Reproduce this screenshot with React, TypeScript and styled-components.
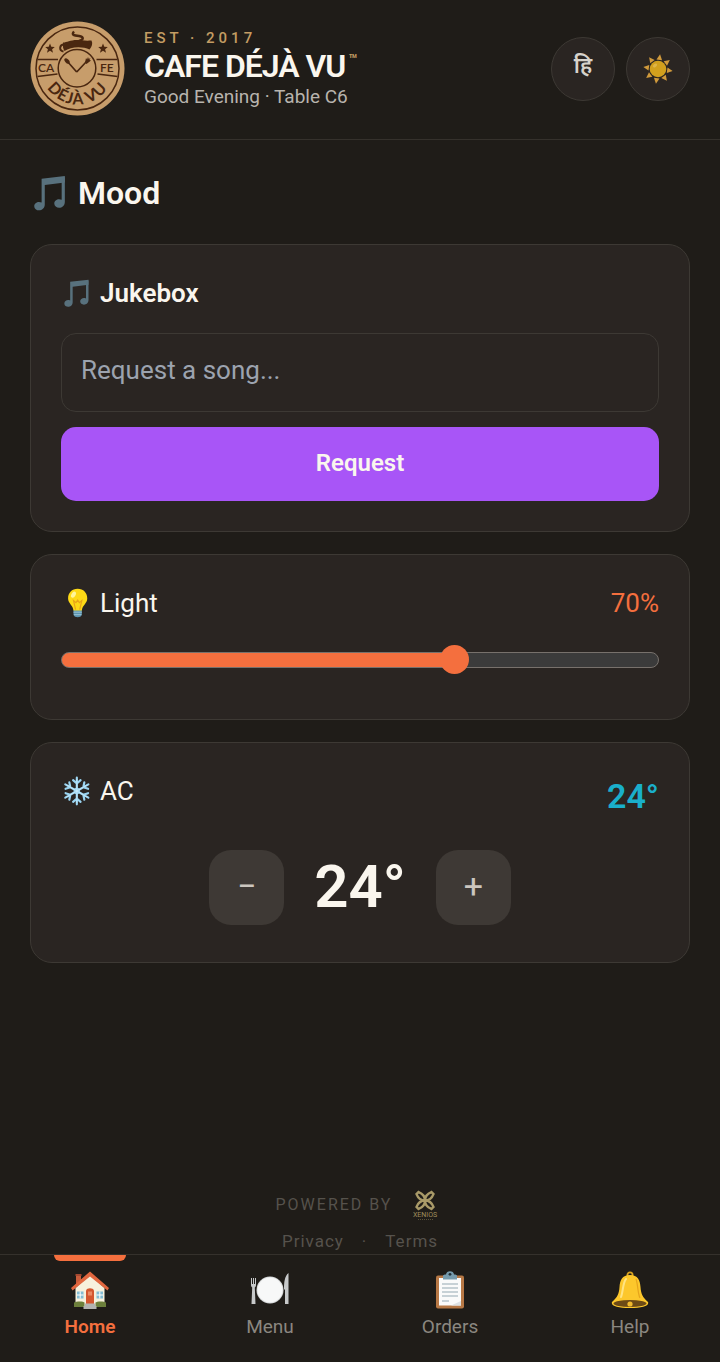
import { CSSProperties, FormEvent, useState } from "react";
import styled, { createGlobalStyle } from "styled-components";

const MIN_LIGHT = 10;
const MAX_LIGHT = 100;

const tabs = [
  { id: "home", label: "Home", Icon: HouseIcon },
  { id: "menu", label: "Menu", Icon: PlateIcon },
  { id: "orders", label: "Orders", Icon: ClipboardIcon },
  { id: "help", label: "Help", Icon: BellIcon },
];

const App = () => {
  const [song, setSong] = useState("");
  const [light, setLight] = useState(70);
  const [temp, setTemp] = useState(24);
  const [tab, setTab] = useState("home");

  const fill = (light - MIN_LIGHT) / (MAX_LIGHT - MIN_LIGHT);

  const handleRequest = (e: FormEvent) => {
    e.preventDefault();
    setSong("");
  };

  return (
    <Page>
      <GlobalStyle />
      <Header>
        <Logo />
        <Brand>
          <Est>EST · 2017</Est>
          <Name>
            CAFE DÉJÀ VU<Mark>™</Mark>
          </Name>
          <Greeting>Good Evening · Table C6</Greeting>
        </Brand>
        <RoundButton type="button" lang="hi">
          हि
        </RoundButton>
        <RoundButton type="button" aria-label="Theme">
          <SunIcon />
        </RoundButton>
      </Header>

      <Main>
        <Title>
          <NoteIcon />
          Mood
        </Title>

        <Card>
          <form onSubmit={handleRequest}>
            <CardTitle>
              <NoteIcon />
              Jukebox
            </CardTitle>
            <SongInput
              type="text"
              aria-label="Request a song"
              placeholder="Request a song..."
              value={song}
              onChange={(e) => setSong(e.target.value)}
            />
            <RequestButton type="submit">Request</RequestButton>
          </form>
        </Card>

        <Card>
          <Row>
            <Label htmlFor="light">
              <BulbIcon />
              Light
            </Label>
            <Percent>{light}%</Percent>
          </Row>
          <Slider
            id="light"
            type="range"
            min={MIN_LIGHT}
            max={MAX_LIGHT}
            value={light}
            onChange={(e) => setLight(Number(e.target.value))}
            style={{ "--fill": fill } as CSSProperties}
          />
        </Card>

        <Card>
          <Row>
            <Label as="span">
              <SnowIcon />
              AC
            </Label>
            <AcValue>{temp}°</AcValue>
          </Row>
          <Stepper>
            <StepButton type="button" onClick={() => setTemp(temp - 1)}>
              −
            </StepButton>
            <Temp>{temp}°</Temp>
            <StepButton type="button" onClick={() => setTemp(temp + 1)}>
              +
            </StepButton>
          </Stepper>
        </Card>
      </Main>

      <Footer>
        <Powered>
          POWERED BY
          <XeniosLogo />
        </Powered>
        <Links>
          <a href="#privacy">Privacy</a>
          <span>·</span>
          <a href="#terms">Terms</a>
        </Links>
      </Footer>

      <Nav>
        {tabs.map(({ id, label, Icon }) => (
          <Tab
            key={id}
            type="button"
            $active={tab === id}
            onClick={() => setTab(id)}
          >
            <Icon />
            {label}
          </Tab>
        ))}
      </Nav>
    </Page>
  );
};
export default App;

function Logo() {
  return (
    <LogoSvg viewBox="0 0 95 95" role="img" aria-label="Cafe Déjà Vu">
      <circle cx="47.5" cy="47.5" r="47" fill="#c79d6b" />
      <g fill="none" stroke="#4a2710" strokeWidth="1.5">
        <circle cx="47.5" cy="47.5" r="41.5" />
        <path d="M7.500 38.500h20.500M66.500 38.500h21M7.500 55.500l20-2.500M67.500 53l20 2.500" />
        <circle cx="47" cy="47.300" r="18.800" />
        <path d="M46.700 51 37 40M46.700 51 57 40" strokeWidth="1.700" />
        <path d="M34 23.500c-4.500 0-5.500 6-.5 7" strokeWidth="2" />
        <path d="M49 20c5-1.500 5-4 0-5-5-.5-8-1-5-4.500" strokeWidth="2.400" />
      </g>
      <g fill="#4a2710">
        <path d="M33 21.500c4 0 7-2.500 14-2.500 5 0 7 1 14.500.5 1.500 3 .5 6-2 9-7-3.500-19-3-25 1.500-1.500-2-2-5-1.500-8.500Z" />
        <ellipse cx="37" cy="40" rx="2" ry="3.200" transform="rotate(-42 37 40)" />
        <path d="m55 41.500 1-4.500 1 1.500 1-2.500.8 2 1.700-1-1 2 1.500.5-4.500 3.500Z" />
        <path d="m20 22.500 1.300 3.300 3.500.2-2.700 2.300.9 3.500-3-2-3 2 .9-3.500-2.700-2.300 3.500-.2Z" />
        <path d="m73 22.500 1.300 3.300 3.500.2-2.700 2.300.9 3.500-3-2-3 2 .9-3.500-2.700-2.300 3.500-.2Z" />
        <path id="arc" d="M11.500 47.500a36 36 0 0 0 72 0" fill="none" />
        <text x="8" y="50.500" fontSize="12" fontWeight="600" fontFamily="Lato">
          CA
        </text>
        <text x="70" y="50.500" fontSize="12" fontWeight="600" fontFamily="Lato">
          FE
        </text>
        <text
          fontSize="16"
          fontWeight="700"
          fontFamily="Lato"
          letterSpacing="1"
          textAnchor="middle"
        >
          <textPath href="#arc" startOffset="50%">
            DÉJÀ VU
          </textPath>
        </text>
      </g>
    </LogoSvg>
  );
}

function SunIcon() {
  return (
    <svg width="32" height="32" viewBox="0 0 32 32" aria-hidden="true">
      <g fill="#d09a3c">
        {[8, 53, 98, 143, 188, 233, 278, 323].map((a) => (
          <path key={a} d="M16 1.200 18.800 6.800 13.200 6.800Z" transform={`rotate(${a} 16 16)`} />
        ))}
      </g>
      <circle cx="16" cy="16" r="8.300" fill="#d2a01d" />
      <ellipse cx="13" cy="12.500" rx="2.500" ry="1.500" fill="#dfb548" transform="rotate(-40 13 12.500)" />
    </svg>
  );
}

function NoteIcon() {
  return (
    <svg viewBox="0 0 36 36" fill="#58717d" aria-hidden="true">
      <path d="M11 4.500 33 2v6L14 10.500V29c0 7-10 7-10 1.500 0-3.500 4-5 7-3.500Z" />
      <path d="M30 3h3v23.500c0 7-10 7-10 1.500 0-3.500 4-5 7-3.500Z" />
    </svg>
  );
}

function BulbIcon() {
  return (
    <svg viewBox="0 0 36 36" aria-hidden="true">
      <g transform="translate(2 0)">
        <path d="M13 26h10v6c-1 4-9 4-10 0Z" fill="#5c94b0" />
        <path d="M13 29h10M13.500 32h9" stroke="#9cc4d4" strokeWidth="1.200" />
        <path d="M18 1C11 1 6.500 6 6.500 12.500c0 6 6 8 6.500 14.500h10c.5-6.500 6.500-8.500 6.500-14.500C29.500 6 25 1 18 1Z" fill="#fdd916" />
        <path d="m15.500 26-2.500-11 3 2.500 2-3 2 3 3-2.500-2.500 11" fill="none" stroke="#e9a419" strokeWidth="1.400" />
        <ellipse cx="13" cy="8" rx="2.500" ry="4" fill="#fff59a" transform="rotate(30 13 8)" />
      </g>
    </svg>
  );
}

function SnowIcon() {
  return (
    <svg viewBox="0 0 36 36" fill="none" stroke="#9bd5f2" strokeWidth="2.600" strokeLinecap="round" aria-hidden="true">
      {[0, 60, 120, 180, 240, 300].map((a) => (
        <path
          key={a}
          d="M19 18V2M19 9l-4.500-4M19 9l4.500-4"
          transform={`rotate(${a} 19 18)`}
        />
      ))}
      <circle cx="19" cy="18" r="2.500" fill="#9bd5f2" />
      <path d="M19 4v28M7 11l24 14M7 25l24-14" stroke="#d3effb" strokeWidth="0.800" />
    </svg>
  );
}

function HouseIcon() {
  return (
    <svg viewBox="0 0 38 38" aria-hidden="true">
      <path d="M5 4h5v11H5Z" fill="#c95c3b" />
      <path d="M4.500 3h6v2h-6Z" fill="#a54830" />
      <path d="M4.500 17 19 4l14.500 13v18h-29Z" fill="#f7f1dd" />
      <path d="M19 .500 38 17l-1.500 2.500L19 5.500 1.500 19.500 0 17Z" fill="#e2673f" />
      <path d="M15 19.500c1-3 7-3 8 0V33h-8Z" fill="#d4562f" />
      <path d="M17 20.500h4v4h-4Z" fill="#e98a64" />
      <path d="M6 20.500h6.500v7H6ZM25.500 20.500H32v7h-6.500Z" fill="#83bcd3" />
      <path d="M9.200 20.500v7M6 24h6.500M28.800 20.500v7M25.500 24H32" stroke="#fff" />
      <path d="M3 31.500c2-1.500 10-1.500 10.500 0V36H3ZM24.500 31.500c1-1.500 9-1.500 10.500 0V36H24.500Z" fill="#6c7f3b" />
      <path d="M14 32.500h10V35h1.500v3h-13v-3H14Z" fill="#b3b3b1" />
    </svg>
  );
}

function PlateIcon() {
  return (
    <svg viewBox="0 0 38 38" aria-hidden="true">
      <circle cx="19" cy="19" r="13.500" fill="#d9dbdc" />
      <circle cx="19" cy="19" r="12.500" fill="#f7f8f8" />
      <path d="M0 7h1v6h1V7h1v6h1V7h1v7c0 1-.5 2-1.200 2.500L4.500 33h-4l.7-16.500C.5 16 0 15 0 14Z" fill="#c7c9ca" />
      <path d="M37.500 2v31h-3.500V19l-1-1c0-6 .5-13 4.500-16Z" fill="#c7c9ca" />
    </svg>
  );
}

function ClipboardIcon() {
  return (
    <svg viewBox="0 0 38 38" aria-hidden="true">
      <rect x="5" y="4.500" width="28" height="33" rx="2" fill="#b77845" />
      <path d="M8 7h22v27.500H8Z" fill="#fafafa" />
      <path d="M11 13h16M11 17h16M11 21h16M11 25h16M11 30h7" stroke="#94a8b2" />
      <path d="M20 34.500 30 30v4.500Z" fill="#dde1e3" />
      <path d="M12 8.500V5c0-1 1-1.500 3-1.500 0-4.500 8-4.500 8 0 2 0 3 .5 3 1.500v3.500Z" fill="#769bad" />
      <circle cx="19" cy="3.300" r="1.400" fill="#22313a" />
    </svg>
  );
}

function BellIcon() {
  return (
    <svg viewBox="0 0 38 38" aria-hidden="true">
      <circle cx="19" cy="4" r="2.600" fill="none" stroke="#d9a320" strokeWidth="1.800" />
      <path d="M19 4C11 4 9 9 8.500 16 8 23 6.500 26 1 31c-1.500 4 6 6 18 6s19.500-2 18-6c-5.500-5-7-8-7.500-15C29 9 27 4 19 4Z" fill="#fcc72c" />
      <ellipse cx="19" cy="32.500" rx="16.500" ry="3.500" fill="#6c4a16" />
      <circle cx="19" cy="33" r="2.600" fill="#f0b92d" />
      <path d="M15 8c-3 3-3 13-5 18" fill="none" stroke="#ffe484" strokeWidth="2" strokeLinecap="round" />
      <path d="M25 8c2 5 1.500 14 4 19" fill="none" stroke="#e6a41c" strokeWidth="1.200" />
    </svg>
  );
}

function XeniosLogo() {
  return (
    <svg width="38" height="30" viewBox="0 0 38 30" fill="#a08f5c" role="img" aria-label="Xenios">
      <g fill="none" stroke="#a99a68" strokeWidth="2.400">
        {[45, 135, 225, 315].map((a) => (
          <path key={a} d="M19 10.500c-3-3-3.500-6-1.500-10.500h3c2 4.500 1.500 7.500-1.500 10.500Z" transform={`rotate(${a} 19 10.500)`} />
        ))}
      </g>
      <text x="19" y="27" fontSize="7" textAnchor="middle">
        XENIOS
      </text>
      <path d="M12 29.500h16" stroke="#5a5138" strokeDasharray="1 1" />
    </svg>
  );
}

const GlobalStyle = createGlobalStyle`
  * {
    box-sizing: border-box;
  }
  body {
    margin: 0;
    background: #1f1c18;
    color: #faf6ee;
    font-family: Roboto, "Noto Sans", sans-serif;
  }
  h1, h2, h3, p {
    margin: 0;
  }
  button, input {
    font-family: inherit;
  }
  button {
    cursor: pointer;
    border: 0;
    padding: 0;
  }
`;

const Page = styled.div`
  min-height: 100vh;
  display: flex;
  flex-direction: column;
`;
const Header = styled.header`
  display: flex;
  align-items: center;
  gap: 11px;
  padding: 21px 30px 23px;
  border-bottom: 1px solid #35312c;
`;
const LogoSvg = styled.svg`
  width: 95px;
  height: 95px;
  flex-shrink: 0;
`;
const Brand = styled.div`
  flex: 1;
  padding-left: 8px;
`;
const Est = styled.p`
  font-size: 15px;
  line-height: 20px;
  font-weight: 500;
  letter-spacing: 4px;
  color: #c39c63;
`;
const Name = styled.h1`
  display: flex;
  font-size: 32px;
  line-height: 36px;
  font-weight: 600;
  letter-spacing: -1px;
`;
const Mark = styled.span`
  padding-left: 3px;
  font-size: 15px;
  line-height: 24px;
  letter-spacing: 0;
  color: #c39c63;
`;
const Greeting = styled.p`
  font-size: 19px;
  line-height: 26px;
  color: #b8b4ae;
`;
const RoundButton = styled.button`
  width: 64px;
  height: 64px;
  display: flex;
  align-items: center;
  justify-content: center;
  border: 1px solid #3d3934;
  border-radius: 50%;
  background: #2a2522;
  color: #d6d2cb;
  font-size: 22px;
  line-height: 24px;
  font-weight: 600;

  &:lang(hi) {
    padding-bottom: 6px;
  }
`;
const Main = styled.main`
  flex: 1;
  display: flex;
  flex-direction: column;
  gap: 22px;
  padding: 29px 30px;
`;
const Title = styled.h2`
  display: flex;
  align-items: center;
  gap: 10px;
  margin-bottom: 5px;
  font-size: 32px;
  line-height: 48px;
  font-weight: 600;

  svg {
    width: 38px;
    height: 38px;
  }
`;
const Card = styled.section`
  padding: 30px;
  border: 1px solid #3d3934;
  border-radius: 22px;
  background: #2a2522;
`;
const CardTitle = styled.h3`
  display: flex;
  align-items: center;
  gap: 9px;
  margin-bottom: 22px;
  font-size: 26px;
  line-height: 36px;
  font-weight: 600;

  svg {
    width: 30px;
    height: 30px;
  }
`;
const SongInput = styled.input`
  display: block;
  width: 100%;
  height: 79px;
  padding: 0 19px 5px;
  border: 1px solid #3d3934;
  border-radius: 15px;
  background: transparent;
  color: #faf6ee;
  font-size: 26px;
  outline: none;

  &::placeholder {
    color: #9ca3af;
  }
`;
const RequestButton = styled.button`
  width: 100%;
  height: 74px;
  margin-top: 15px;
  padding-bottom: 2px;
  border-radius: 15px;
  background: #a855f7;
  color: #faf6ee;
  font-size: 24px;
  font-weight: 600;
`;
const Row = styled.div`
  display: flex;
  justify-content: space-between;
  align-items: flex-start;
`;
const Label = styled.label`
  display: flex;
  align-items: center;
  gap: 9px;
  font-size: 26px;
  line-height: 36px;

  svg {
    width: 30px;
    height: 30px;
  }
`;
const Percent = styled.span`
  font-size: 26px;
  line-height: 36px;
  color: #f46f3e;
`;
const AcValue = styled.span`
  font-size: 34px;
  line-height: 47px;
  font-weight: 600;
  color: #1aafcb;
`;
const Slider = styled.input`
  --stop: calc(14px + var(--fill) * (100% - 28px));
  appearance: none;
  display: block;
  width: 100%;
  height: 30px;
  margin: 24px 0 14px;
  background: transparent;
  cursor: pointer;

  &::-webkit-slider-runnable-track {
    height: 16px;
    border: 1px solid #77716c;
    border-radius: 8px;
    background: linear-gradient(
      to right,
      #f46f3e var(--stop),
      #3b3b3b var(--stop)
    );
  }
  &::-webkit-slider-thumb {
    appearance: none;
    width: 29px;
    height: 29px;
    margin-top: -8px;
    border-radius: 50%;
    background: #f46f3e;
  }
`;
const Stepper = styled.div`
  display: flex;
  justify-content: center;
  align-items: center;
  gap: 30px;
  margin-top: 22px;
`;
const StepButton = styled.button`
  width: 75px;
  height: 75px;
  padding-bottom: 2px;
  border-radius: 22px;
  background: #3e3935;
  color: #cbc6bf;
  font-size: 34px;
`;
const Temp = styled.span`
  font-size: 60px;
  line-height: 90px;
  font-weight: 600;
`;
const Footer = styled.footer`
  display: flex;
  flex-direction: column;
  align-items: center;
  gap: 8px;
  color: #56524c;
`;
const Powered = styled.div`
  display: flex;
  align-items: center;
  gap: 14px;
  font-size: 16px;
  line-height: 30px;
  letter-spacing: 2px;

  svg {
    letter-spacing: 0;
  }
`;
const Links = styled.div`
  display: flex;
  gap: 18px;
  font-size: 17px;
  line-height: 26px;
  letter-spacing: 1px;

  a {
    color: inherit;
    text-decoration: none;
  }
`;
const Nav = styled.nav`
  position: sticky;
  bottom: 0;
  display: grid;
  grid-template-columns: repeat(4, 1fr);
  height: 108px;
  border-top: 1px solid #35312c;
  background: #1f1c18;
`;
const Tab = styled.button<{ $active: boolean }>`
  display: flex;
  flex-direction: column;
  align-items: center;
  gap: 5px;
  background: none;
  color: ${({ $active }) => ($active ? "#f46f3e" : "#8b8780")};
  font-size: 19px;
  line-height: 26px;
  font-weight: ${({ $active }) => ($active ? 600 : 400)};

  &::before {
    content: "";
    width: 40%;
    height: 6px;
    border-radius: 0 0 6px 6px;
    background: ${({ $active }) => ($active ? "#f46f3e" : "transparent")};
  }
  svg {
    width: 38px;
    height: 38px;
    margin-top: 5px;
  }
`;
